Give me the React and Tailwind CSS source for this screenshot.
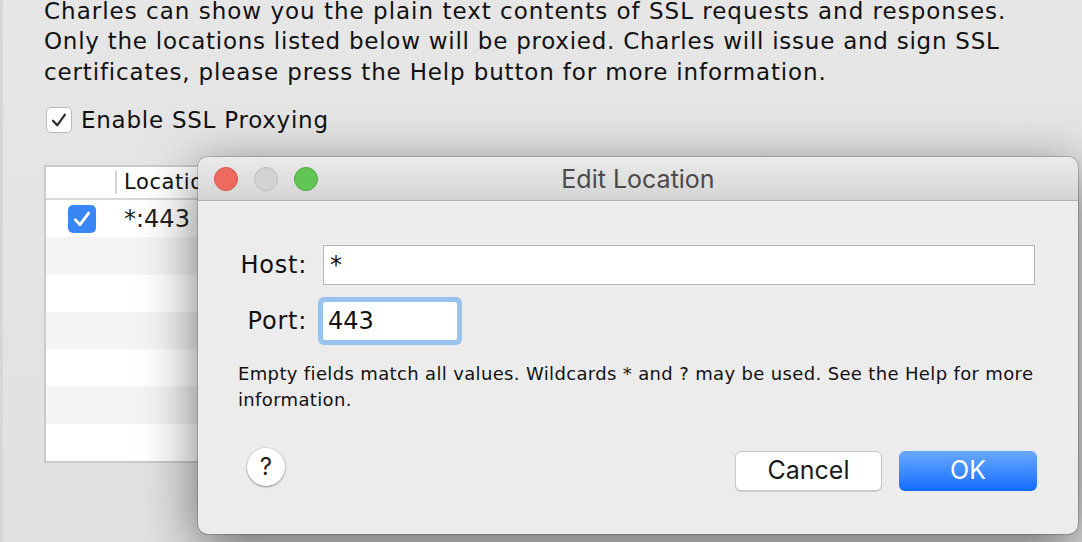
import React from "react";

const LUCIDA = { fontFamily: '"DejaVu Sans", "Liberation Sans", sans-serif' };
const SF = { fontFamily: 'Inter, "Liberation Sans", sans-serif' };

function Check({ color = "#333", w = 3 }) {
  return (
    <svg viewBox="0 0 20 20" className="w-full h-full">
      <path d="M4 10.8 L8.2 15.2 L16 4.6" fill="none" stroke={color} strokeWidth={w} strokeLinecap="round" strokeLinejoin="round" />
    </svg>
  );
}

function TableRow({ shade, children }) {
  return (
    <div className={`h-[38px] flex items-center ${shade ? "bg-[#f4f4f4]" : "bg-white"}`}>{children}</div>
  );
}

export default function App() {
  return (
    <div className="w-[1082px] h-[542px] relative overflow-hidden bg-gradient-to-b from-[#e6e6e6] to-[#e1e1e1] border-l-[3px] border-[#d6d6d6]" style={LUCIDA}>
      <div className="pl-[41px]">
        <div className="text-[23px] tracking-[0.75px] text-[#111] whitespace-nowrap">
          <div className="leading-[22px] tracking-[1px]">Charles can show you the plain text contents of SSL requests and responses.</div>
          <div className="leading-[31px] mt-[4px]">Only the locations listed below will be proxied. Charles will issue and sign SSL</div>
          <div className="leading-[31px] tracking-[0.85px]">certificates, please press the Help button for more information.</div>
        </div>
        <div className="flex items-center mt-[19px] h-[26px]">
          <div className="ml-[2px] w-[26px] h-[26px] rounded-[5px] bg-white border border-[#b9b9b9] p-[2px]">
            <Check color="#333" w={2.3} />
          </div>
          <span className="ml-[9px] text-[23px] tracking-[0.75px] text-[#111]">Enable SSL Proxying</span>
        </div>
        <div className="mt-[32px] w-[420px] h-[298px] border-2 border-[#cacaca] bg-white flex flex-col">
          <div className="h-[33px] flex items-center border-b-2 border-[#d8d8d8] shrink-0">
            <div className="w-[71px] h-[23px] border-r-2 border-[#d4d4d4]" />
            <span className="ml-[7px] text-[21px] tracking-[0.6px] text-[#111]">Location</span>
          </div>
          <TableRow>
            <div className="w-[71px] flex justify-center">
              <div className="w-[28px] h-[28px] rounded-[5px] bg-[#3b86f7] p-[3px]">
                <Check color="#fff" w={2.6} />
              </div>
            </div>
            <span className="ml-[7px] text-[24px] text-[#222]">*:443</span>
          </TableRow>
          <TableRow shade />
          <TableRow />
          <TableRow shade />
          <TableRow />
          <TableRow shade />
          <TableRow />
        </div>
      </div>

      <div className="absolute left-[195px] top-[157px] w-[880px] h-[377px] rounded-[10px] bg-[#ececec] shadow-[0_14px_55px_rgba(0,0,0,0.55),0_0_0_1px_rgba(0,0,0,0.18)] flex flex-col overflow-hidden">
        <div className="h-[44px] shrink-0 relative flex items-center justify-center bg-gradient-to-b from-[#ebebeb] to-[#d4d4d4] border-b border-[#b2b2b2]">
          <div className="absolute left-[16px] top-0 h-full flex items-center gap-[16px]">
            <div className="w-[24px] h-[24px] rounded-full bg-[#ed6a5e] border border-[#d2544a]" />
            <div className="w-[24px] h-[24px] rounded-full bg-[#d3d3d3] border border-[#bdbdbd]" />
            <div className="w-[24px] h-[24px] rounded-full bg-[#61c554] border border-[#4ea83e]" />
          </div>
          <span className="mt-[3px] text-[25px] text-[#4a4a4a]" style={SF}>Edit Location</span>
        </div>

        <div className="pt-[44px] flex flex-col">
          <div className="flex items-center">
            <span className="w-[109px] text-right text-[24px] tracking-[0.75px] text-[#111]">Host:</span>
            <div className="ml-[16px] w-[712px] h-[40px] bg-white border border-[#b5b5b5] flex items-center pl-[6px] text-[24px] text-[#111]">*</div>
          </div>
          <div className="flex items-center mt-[17px]">
            <span className="w-[109px] text-right text-[24px] tracking-[0.75px] text-[#111]">Port:</span>
            <div className="ml-[16px] w-[134px] h-[38px] bg-white rounded-[2px] ring-[5px] ring-[#98c3ef] flex items-center pl-[5px] text-[24px] text-[#111]">443</div>
          </div>
          <p className="mt-[21px] pl-[40px] text-[18px] leading-[26px] tracking-[0.35px] text-[#111] whitespace-nowrap">
            Empty fields match all values. Wildcards * and ? may be used. See the Help for more
            <br />
            information.
          </p>
          <div className="mt-[38px] flex items-start justify-between pl-[49px] pr-[41px]">
            <div className="mt-[-3px] w-[38px] h-[38px] rounded-full bg-white shadow-[0_1px_2px_rgba(0,0,0,0.35),0_0_0_1px_rgba(0,0,0,0.08)] flex items-center justify-center text-[24px] text-[#222]" style={SF}>?</div>
            <div className="flex gap-[17px]">
              <div className="w-[147px] h-[40px] rounded-[6px] bg-white border border-[#c6c6c6] shadow-[0_1px_1px_rgba(0,0,0,0.12)] flex items-center justify-center text-[25px] text-[#1a1a1a]" style={SF}>Cancel</div>
              <div className="w-[138px] h-[40px] rounded-[6px] bg-gradient-to-b from-[#68a8ff] to-[#0a6bff] flex items-center justify-center text-[25px] text-white" style={SF}>OK</div>
            </div>
          </div>
        </div>
      </div>
    </div>
  );
}
